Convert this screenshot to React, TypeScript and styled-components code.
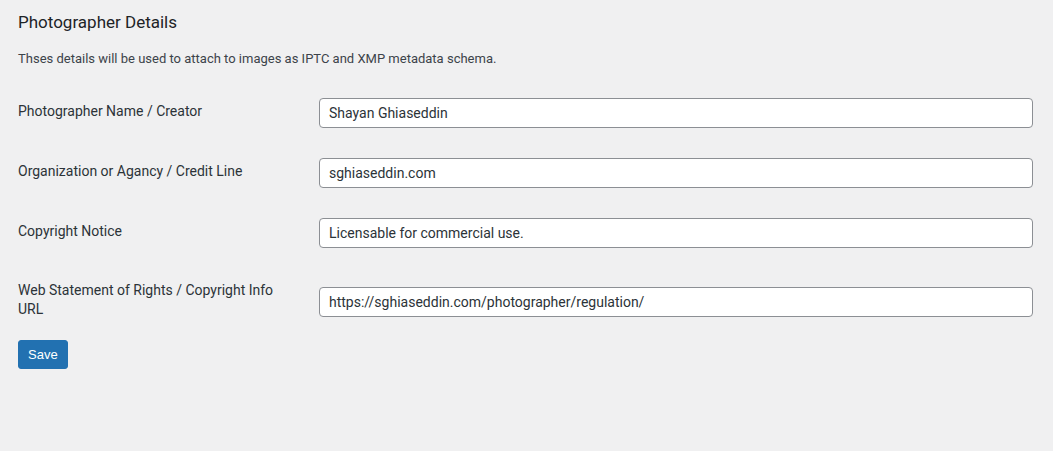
import React from "react";
import styled, { createGlobalStyle } from "styled-components";

const Global = createGlobalStyle`
  html, body { margin: 0; padding: 0; background: #f0f0f1; }
  body { font-family: Roboto, "Noto Sans", sans-serif; color: #1d2327; }
  * { box-sizing: border-box; }
`;

const Page = styled.div`
  padding: 10px 20px 40px 18px;
  height: 451px;
`;

const Title = styled.h2`
  margin: 0;
  font-size: 17px;
  font-weight: 400;
  line-height: 24px;
  color: #1d2327;
`;

const Description = styled.p`
  margin: 17px 0 0;
  font-size: 13px;
  line-height: 16px;
  color: #3c434a;
`;

const Form = styled.form`
  margin-top: 31px;
  display: flex;
  flex-direction: column;
`;

const Rows = styled.div`
  display: grid;
  grid-template-columns: 301px 1fr;
  row-gap: 30px;
  align-items: center;
`;

const Label = styled.label`
  font-size: 14px;
  line-height: 19px;
  padding: 3px 24px 7px 0;
  color: #2c3338;
`;

const Input = styled.input`
  width: 100%;
  height: 30px;
  border: 1px solid #8c8f94;
  border-radius: 4px;
  background: #fff;
  padding: 0 9px;
  font-family: Roboto, "Noto Sans", sans-serif;
  font-size: 14px;
  color: #2c3338;
`;

const Button = styled.button`
  align-self: flex-start;
  margin-top: 14px;
  height: 29px;
  padding: 0 9px;
  background: #2271b1;
  border: 1px solid #2271b1;
  border-radius: 3px;
  color: #fff;
  font-family: "Liberation Sans", Arial, sans-serif;
  font-size: 13px;
`;

const fields = [
  { label: "Photographer Name / Creator", value: "Shayan Ghiaseddin" },
  { label: "Organization or Agancy / Credit Line", value: "sghiaseddin.com" },
  { label: "Copyright Notice", value: "Licensable for commercial use." },
  {
    label: "Web Statement of Rights / Copyright Info URL",
    value: "https://sghiaseddin.com/photographer/regulation/",
  },
];

export default function App() {
  return (
    <>
      <Global />
      <Page>
        <Title>Photographer Details</Title>
        <Description>
          Thses details will be used to attach to images as IPTC and XMP metadata schema.
        </Description>
        <Form onSubmit={(e) => e.preventDefault()}>
          <Rows>
            {fields.map((f) => (
              <React.Fragment key={f.label}>
                <Label>{f.label}</Label>
                <Input defaultValue={f.value} />
              </React.Fragment>
            ))}
          </Rows>
          <Button type="submit">Save</Button>
        </Form>
      </Page>
    </>
  );
}
